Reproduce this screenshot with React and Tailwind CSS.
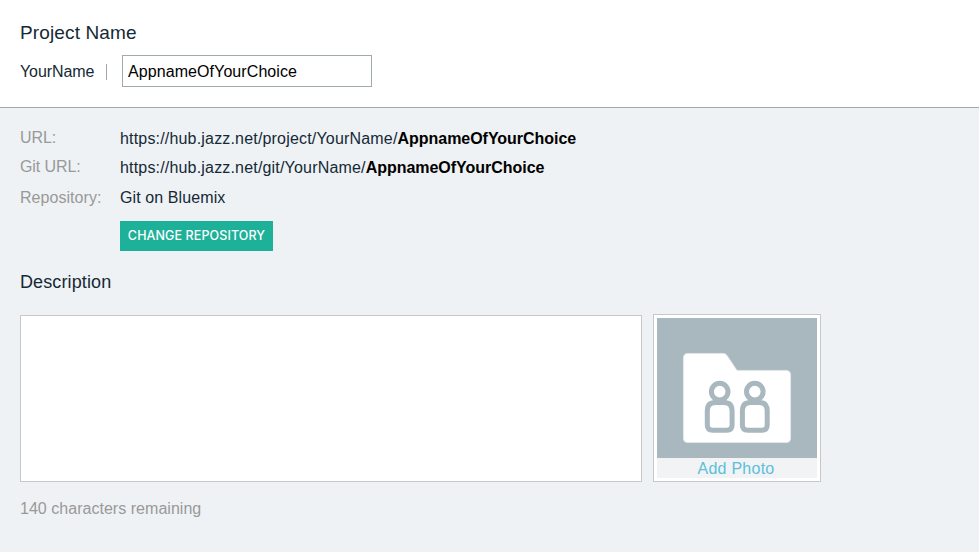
function Person({ x }) {
  return (
    <g transform={`translate(${x} 0)`} fill="none" stroke="#a9b7be" strokeWidth="5">
      <circle cx="0" cy="73.6" r="8.3" />
      <path d="M-4.5 84.4H4.5Q12.4 84.4 12.4 93V107Q12.4 112.2 7 112.2H-7Q-12.4 112.2 -12.4 107V93Q-12.4 84.4 -4.5 84.4Z" />
    </g>
  );
}

function FolderIcon() {
  return (
    <svg width="160" height="140" viewBox="0 0 160 140" className="block bg-[#a9b7be]">
      <path
        d="M31 35.4H66.5Q68.5 35.4 70 37.4L80 52.4H129Q133.6 52.4 133.6 57V120Q133.6 124.6 129 124.6H31Q26.4 124.6 26.4 120V40Q26.4 35.4 31 35.4Z"
        fill="#fff"
        stroke="#e3e8eb"
        strokeWidth="0.8"
      />
      <Person x={62.7} />
      <Person x={97.8} />
    </svg>
  );
}

function Row({ label, className, labelClass, children }) {
  return (
    <div className={`flex h-5 ${className}`}>
      <div className="w-[100px] shrink-0">
        <span className={`block text-[#999] ${labelClass}`}>{label}</span>
      </div>
      <div>{children}</div>
    </div>
  );
}

export default function App() {
  return (
    <div className="h-[552px] w-[979px] overflow-hidden whitespace-nowrap bg-[#eef2f5] font-['Liberation_Sans',Arial,sans-serif] text-base leading-5 text-[#152935]">
      <header className="h-[108px] border-b border-[#a0abb0] bg-white pl-5 pt-[23px]">
        <h1 className="h-8 text-[19px] leading-5 tracking-[0.13px]">Project Name</h1>
        <div className="flex h-8 items-center">
          <span className="w-[86px] pt-0.5 tracking-[-0.1px]">YourName</span>
          <span className="mr-[15px] mt-px h-4 w-px bg-[#a7a3b0]" />
          <input
            aria-label="Project name"
            defaultValue="AppnameOfYourChoice"
            className="h-8 w-[250px] border border-[#a0abb0] bg-white px-[5px] pt-0.5 tracking-[0.08px] text-black outline-none"
          />
        </div>
      </header>
      <main className="pl-5 pt-[21px]">
        <Row label="URL:" labelClass="-mt-px tracking-[-0.1px]" className="mb-[9px]">
          <span className="tracking-[0.18px]">https://hub.jazz.net/project/YourName/</span>
          <b className="tracking-[-0.03px] text-black">AppnameOfYourChoice</b>
        </Row>
        <Row label="Git URL:" labelClass="-mt-px tracking-[-0.1px]" className="mb-[10px]">
          <span className="tracking-[0.18px]">https://hub.jazz.net/git/YourName/</span>
          <b className="tracking-[-0.03px] text-black">AppnameOfYourChoice</b>
        </Row>
        <Row label="Repository:" labelClass="tracking-[0.05px]" className="mb-[13px]">
          <span className="tracking-[0.1px]">Git on Bluemix</span>
        </Row>
        <button className="ml-[100px] flex h-[30px] w-[153px] items-center justify-center bg-[#1db199] pb-px font-['Inter',sans-serif] text-[12.5px] font-medium tracking-[0.1px] text-white">
          CHANGE REPOSITORY
        </button>
        <h2 className="mt-[19px] h-11 text-lg leading-6 tracking-[0.12px]">Description</h2>
        <div className="flex items-end">
          <textarea
            aria-label="Description"
            className="mr-[11px] block h-[167px] w-[622px] resize-none border border-[#c8c8cb] bg-white outline-none"
          />
          <div className="h-[168px] w-[168px] border border-[#c8c8cb] bg-white p-[3px]">
            <FolderIcon />
            <div className="h-5 bg-[#f1f3f5] pr-0.5 text-center leading-[22px] tracking-[0.25px] text-[#5bc0d9]">
              Add Photo
            </div>
          </div>
        </div>
        <p className="mt-[17px] tracking-[0.03px] text-[#999]">140 characters remaining</p>
      </main>
    </div>
  );
}
